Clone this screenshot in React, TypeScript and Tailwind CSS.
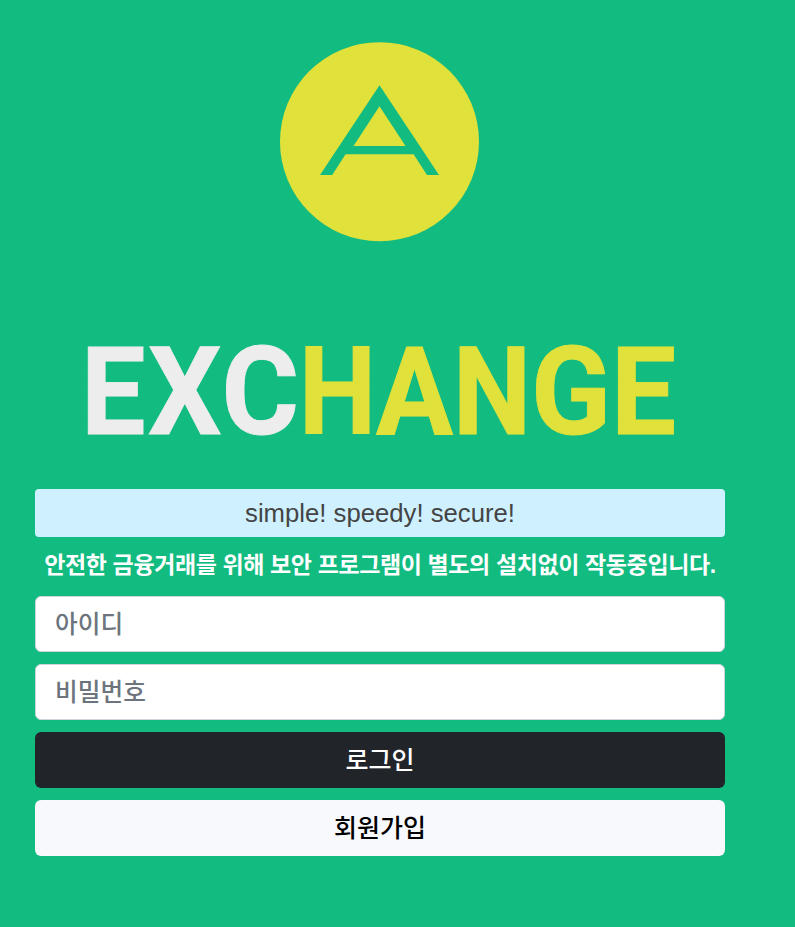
import React from 'react';

const LIGHT = '#ededed';
const YELLOW = '#e0e13a';

const letters = [
    { char: 'E', x: 46, width: 64.5, color: LIGHT },
    { char: 'X', x: 113, width: 73.5, color: LIGHT },
    { char: 'C', x: 186.5, width: 77.5, color: LIGHT },
    { char: 'H', x: 264, width: 77, color: YELLOW },
    { char: 'A', x: 341, width: 77, color: YELLOW },
    { char: 'N', x: 418, width: 78, color: YELLOW },
    { char: 'G', x: 496, width: 80, color: YELLOW },
    { char: 'E', x: 576, width: 65, color: YELLOW },
];

const Logo: React.FC = () => (
    <svg className="block" width="200" height="200" viewBox="0 0 200 200" aria-label="Logo">
        <circle cx="99.5" cy="99.7" r="99.5" fill={YELLOW} />
        <path
            d="M99.5 43.3 L159 133 H147 L133.6 112.3 H65.6 L52.2 133 H40 Z M99.5 64.3 L73.5 104 H125.5 Z"
            fill="#12bb80"
            fillRule="evenodd"
        />
    </svg>
);

const Wordmark: React.FC = () => (
    <svg className="block font-['Roboto',sans-serif] font-bold" width="690" height="168" viewBox="0 0 690 168">
        {letters.map(({ char, x, width, color }) => (
            <text
                key={x}
                x={x}
                y="133.6"
                fontSize="123"
                textLength={width}
                lengthAdjust="spacingAndGlyphs"
                fill={color}
                stroke={color}
                strokeWidth="0.9"
            >
                {char}
            </text>
        ))}
    </svg>
);

const App: React.FC = () => {
    return (
        <div className="min-h-screen bg-[#12bb80] font-['Liberation_Sans','Noto_Sans_CJK_KR',sans-serif] overflow-hidden">
            <main className="ml-[35px] w-[690px] pt-[42px]">
                <div className="flex justify-center">
                    <Logo />
                </div>
                <h1 className="mt-[58px]" aria-label="EXCHANGE">
                    <Wordmark />
                </h1>

                <p className="mt-[21px] h-12 rounded bg-[#cff1ff] text-center text-[25.7px] leading-12 text-[#444444]">
                    simple! speedy! secure!
                </p>
                <p className="mt-3 h-8 whitespace-nowrap text-center text-[23px] font-bold leading-8 tracking-[-0.38px] text-white">
                    안전한 금융거래를 위해 보안 프로그램이 별도의 설치없이 작동중입니다.
                </p>

                <form className="mt-[15px] flex flex-col gap-3">
                    <input
                        type="text"
                        placeholder="아이디"
                        className="h-14 w-full rounded-md border border-[#ced4da] bg-white px-[19px] pt-0.5 text-[24.7px] font-medium placeholder:text-[#6c757d]"
                    />
                    <input
                        type="password"
                        placeholder="비밀번호"
                        className="h-14 w-full rounded-md border border-[#ced4da] bg-white px-[19px] pt-0.5 text-[24.7px] font-medium placeholder:text-[#6c757d]"
                    />
                    <button type="button" className="h-14 w-full rounded-md bg-[#212529] pt-0.5 text-[25px] font-medium text-white">
                        로그인
                    </button>
                    <button type="button" className="h-14 w-full rounded-md bg-[#f8f9fc] pt-0.5 text-[25px] font-medium text-black">
                        회원가입
                    </button>
                </form>
            </main>
        </div>
    );
};

export default App;
